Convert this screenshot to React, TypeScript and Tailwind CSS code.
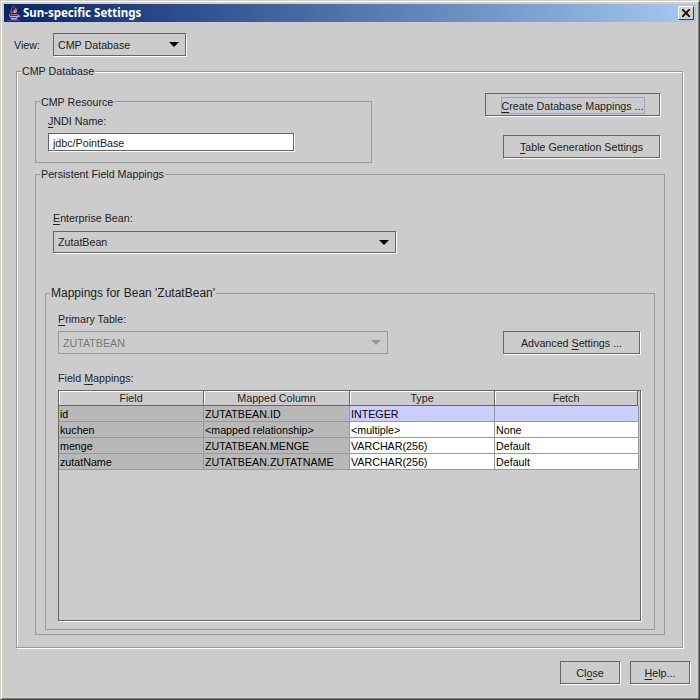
import type { ReactNode } from 'react';

const FONT = 'font-["Liberation_Sans",Arial,sans-serif] text-[10.7px] text-[#222]';

function U({ children }: { children: ReactNode }) {
  return <span className="underline underline-offset-2">{children}</span>;
}

function Group({ title, className, titleClass = '', children, etched = false }: { title: string; className: string; titleClass?: string; children?: ReactNode; etched?: boolean }) {
  return (
    <div className={`relative border border-[#999] ${etched ? 'shadow-[1px_1px_0_#fff,inset_1px_1px_0_#fff]' : ''} ${className}`}>
      <span className={`absolute -top-[7px] left-[4px] bg-[#cccccc] px-[1px] leading-[13px] ${titleClass}`}>{title}</span>
      {children}
    </div>
  );
}

function Button({ children, className, focused = false }: { children: ReactNode; className: string; focused?: boolean }) {
  return (
    <div className={`flex h-[23px] items-center justify-center border border-[#666] bg-[#cccccc] pt-[1px] shadow-[1px_1px_0_#fff] ${className}`}>
      <span className={focused ? 'border border-[#a3a3cc] pt-[2px] leading-[13px]' : 'pt-[1px] leading-[13px]'}>{children}</span>
    </div>
  );
}

function Combo({ value, className, disabled = false }: { value: string; className: string; disabled?: boolean }) {
  return (
    <div className={`flex items-center justify-between pl-[4px] ${disabled ? 'border border-[#999] text-[#777]' : 'border border-[#666] shadow-[1px_1px_0_#fff]'} ${className}`}>
      <span className="pt-[1px]">{value}</span>
      <span className={`mr-[6px] h-0 w-0 border-x-[5px] border-t-[5px] border-x-transparent ${disabled ? 'border-t-[#999]' : 'border-t-black'}`} />
    </div>
  );
}

function JavaIcon() {
  return (
    <svg width="16" height="17" viewBox="0 0 16 17" className="ml-[2px] shrink-0">
      <path d="M8 0c1 2-3 3-2 6 .4 1 1 1.500 1.500 2H5C3 6 6 3 8 0z" fill="#d8502a" />
      <path d="M9 2c.5 2-1 3 0 6h1.500C12 6 11 4 9 2z" fill="#e8703a" />
      <path d="M7.500 4.500c.5 1.500-.5 2 .5 3.500h1c.5-1.500 0-2.500-1.500-3.500z" fill="#f4c060" />
      <path d="M2.500 9h10v1h1.800v2.300h-2.300l-1 2.700H5L3.500 12z" fill="#b8b8dc" stroke="#2a2a70" strokeWidth=".9" />
      <path d="M4 10.500h7.500M4.500 12.500h6" stroke="#2a2a70" strokeWidth=".9" />
      <path d="M1 15.500h13" stroke="#4a4a98" strokeWidth="1.200" />
    </svg>
  );
}

const rows = [
  { field: 'id', column: 'ZUTATBEAN.ID', type: 'INTEGER', fetch: '', selected: true },
  { field: 'kuchen', column: '<mapped relationship>', type: '<multiple>', fetch: 'None', selected: false },
  { field: 'menge', column: 'ZUTATBEAN.MENGE', type: 'VARCHAR(256)', fetch: 'Default', selected: false },
  { field: 'zutatName', column: 'ZUTATBEAN.ZUTATNAME', type: 'VARCHAR(256)', fetch: 'Default', selected: false },
];

function HeaderCell({ children, className }: { children: ReactNode; className: string }) {
  return (
    <div className={`flex h-[15px] items-center justify-center border-r border-b border-[#666] bg-[#cccccc] shadow-[inset_1px_1px_0_#fff] leading-[13px] ${className}`}>
      {children}
    </div>
  );
}

function Cell({ children, className }: { children?: ReactNode; className: string }) {
  return <div className={`flex h-[16px] items-center overflow-hidden border-r border-b border-[#999] pl-[1px] pt-[2px] leading-[13px] text-black ${className}`}>{children}</div>;
}

export default function App() {
  return (
    <div className={`flex h-[700px] w-[700px] flex-col border border-t-[#d4d0c8] border-l-[#d4d0c8] border-r-[#404040] border-b-[#404040] bg-[#d4d0c8] p-[3px] shadow-[inset_1px_1px_0_#fff,inset_-1px_-1px_0_#808080] ${FONT}`}>
      {/* title bar */}
      <div className="flex h-[18px] shrink-0 items-center bg-gradient-to-r from-[#0a246a] to-[#a6caf0] pr-[2px]">
        <JavaIcon />
        <span className='ml-[1px] font-["Noto_Sans",sans-serif] text-[11.5px] font-bold text-white'>Sun-specific Settings</span>
        <div className="ml-auto flex h-[14px] w-[16px] items-center justify-center border border-b-[#404040] border-l-white border-r-[#404040] border-t-white bg-[#d4d0c8]">
          <svg width="8" height="8" viewBox="0 0 8 8">
            <path d="M0 0l8 8M8 0L0 8" stroke="#000" strokeWidth="1.800" />
          </svg>
        </div>
      </div>

      {/* dialog body */}
      <div className="flex flex-1 flex-col bg-[#cccccc]">
        <div className="ml-[10px] mt-[11px] flex h-[24px] items-start">
          <span className="w-[39px] self-center">View:</span>
          <Combo value="CMP Database" className="h-[23px] w-[133px]" />
        </div>

        <Group etched title="CMP Database" className="ml-[12px] mt-[14px] h-[577px] w-[667px] pl-[18px] pt-[21px]">
          <div className="flex">
            <Group title="CMP Resource" titleClass="pt-[1px]" className="mt-[8px] h-[62px] w-[337px] pl-[12px] pt-[13px]">
              <div className="leading-[13px]"><U>J</U>NDI Name:</div>
              <div className="mt-[5px] flex h-[18px] w-[246px] items-center border border-[#666] bg-white pl-[4px] pt-[2px] shadow-[1px_1px_0_#fff]">jdbc/PointBase</div>
            </Group>
            <div className="ml-auto mr-[22px] flex flex-col items-end gap-[19px]">
              <Button focused className="w-[175px]"><U>C</U>reate Database Mappings ...</Button>
              <Button className="w-[157px]"><U>T</U>able Generation Settings</Button>
            </div>
          </div>

          <Group title="Persistent Field Mappings" className="mt-[11px] h-[461px] w-[630px] pl-[17px] pt-[37px]">
            <div className="leading-[13px]"><U>E</U>nterprise Bean:</div>
            <Combo value="ZutatBean" className="mt-[6px] h-[22px] w-[343px]" />

            <Group title="Mappings for Bean 'ZutatBean'" titleClass="text-[12px]" className="-ml-[8px] mt-[40px] h-[337px] w-[610px] pl-[12px] pt-[19px]">
              <div className="leading-[13px]"><U>P</U>rimary Table:</div>
              <div className="mt-[5px] flex">
                <Combo disabled value="ZUTATBEAN" className="h-[23px] w-[330px]" />
                <Button className="ml-[115px] w-[137px]">Advanced <U>S</U>ettings ...</Button>
              </div>
              <div className="mt-[18px] leading-[13px]">Field <U>M</U>appings:</div>
              <div className="mt-[5px] h-[231px] w-[583px] border border-[#666] shadow-[1px_1px_0_#fff]">
                <div className="flex">
                  <HeaderCell className="w-[145px]">Field</HeaderCell>
                  <HeaderCell className="w-[146px]">Mapped Column</HeaderCell>
                  <HeaderCell className="w-[145px]">Type</HeaderCell>
                  <HeaderCell className="w-[143px]">Fetch</HeaderCell>
                </div>
                {rows.map((row) => {
                  const bg = row.selected ? 'bg-[#ccccff]' : 'bg-white';
                  return (
                    <div key={row.field} className="flex">
                      <Cell className="w-[145px] bg-[#b8b8b8]">{row.field}</Cell>
                      <Cell className="w-[146px] bg-[#b8b8b8]">{row.column}</Cell>
                      <Cell className={`w-[145px] ${bg}`}>{row.type}</Cell>
                      <Cell className={`w-[144px] ${bg}`}>{row.fetch}</Cell>
                    </div>
                  );
                })}
              </div>
            </Group>
          </Group>
        </Group>

        <div className="mr-[6px] mt-[13px] flex justify-end gap-[10px]">
          <Button className="w-[60px]">Cl<U>o</U>se</Button>
          <Button className="w-[60px]"><U>H</U>elp...</Button>
        </div>
      </div>
    </div>
  );
}
